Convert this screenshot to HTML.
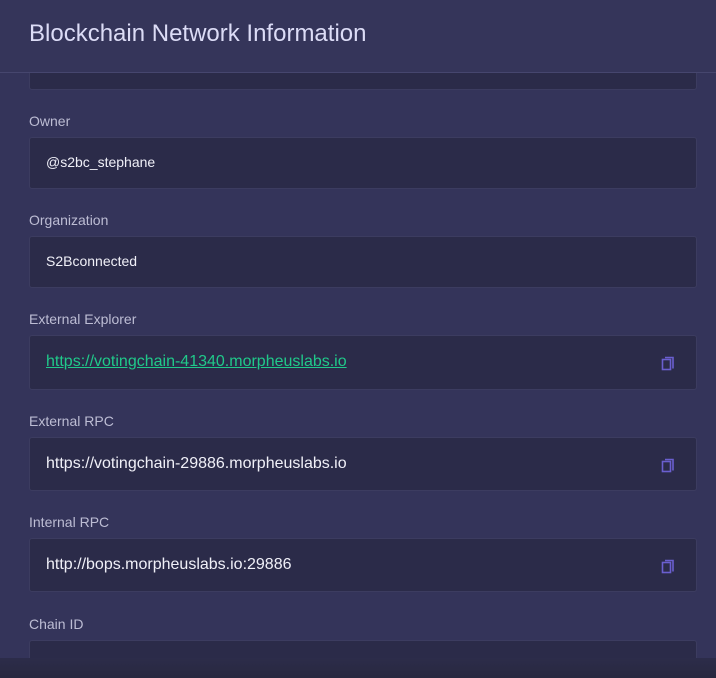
<!DOCTYPE html>
<html style="height:678px;overflow:hidden"><head><style>
body{margin:0;width:716px;height:678px;overflow:hidden;background:#34345a;font-family:"Liberation Sans",sans-serif;position:relative}
.hdr{position:absolute;left:0;top:0;width:716px;height:73px;background:#35355a;border-bottom:1px solid #46466e;box-sizing:border-box;z-index:2}
.hdr h1{margin:0;position:absolute;left:29px;top:20px;font-weight:400;font-size:24px;color:#dcdcf6}
.lbl{position:absolute;left:29px;font-size:14px;color:#bdbdd4}
.box{position:absolute;left:29px;width:668px;background:#2b2b49;border:1px solid #3c3c60;border-radius:3px;box-sizing:border-box}
.box span{position:absolute;left:16px;color:#f0f0f8}
.ic{position:absolute;left:629px}
.fade{position:absolute;left:0;top:658px;width:716px;height:20px;background:linear-gradient(#2c2c4a,#28283f);z-index:3}
</style></head><body>
<div class="hdr"><h1>Blockchain Network Information</h1></div>
<div class="box" style="top:40px;height:50px"></div>
<div class="lbl" style="top:113px">Owner</div>
<div class="box" style="top:137px;height:52px"><span style="top:16px;font-size:14px">@s2bc_stephane</span></div>
<div class="lbl" style="top:212px">Organization</div>
<div class="box" style="top:236px;height:52px"><span style="top:16px;font-size:14px">S2Bconnected</span></div>
<div class="lbl" style="top:311px">External Explorer</div>
<div class="box" style="top:335px;height:55px"><span style="top:17px;font-size:16px;color:#20c98a;text-decoration:underline">https://votingchain-41340.morpheuslabs.io</span>
<svg class="ic" style="top:18px" width="18" height="18" viewBox="0 0 18 18"><path d="M6 3.5h8v11" fill="none" stroke="#6a5fcf" stroke-width="1.6"/><rect x="3.5" y="5.5" width="8" height="10" fill="none" stroke="#6a5fcf" stroke-width="1.6"/></svg></div>
<div class="lbl" style="top:413px">External RPC</div>
<div class="box" style="top:437px;height:54px"><span style="top:17px;font-size:16px">https://votingchain-29886.morpheuslabs.io</span>
<svg class="ic" style="top:18px" width="18" height="18" viewBox="0 0 18 18"><path d="M6 3.5h8v11" fill="none" stroke="#6a5fcf" stroke-width="1.6"/><rect x="3.5" y="5.5" width="8" height="10" fill="none" stroke="#6a5fcf" stroke-width="1.6"/></svg></div>
<div class="lbl" style="top:514px">Internal RPC</div>
<div class="box" style="top:538px;height:54px"><span style="top:17px;font-size:16px">http://bops.morpheuslabs.io:29886</span>
<svg class="ic" style="top:18px" width="18" height="18" viewBox="0 0 18 18"><path d="M6 3.5h8v11" fill="none" stroke="#6a5fcf" stroke-width="1.6"/><rect x="3.5" y="5.5" width="8" height="10" fill="none" stroke="#6a5fcf" stroke-width="1.6"/></svg></div>
<div class="lbl" style="top:616px">Chain ID</div>
<div class="box" style="top:640px;height:38px;border-bottom:none"><span style="top:17px;font-size:16px">1229</span></div>
<div class="fade"></div>
</body></html>
